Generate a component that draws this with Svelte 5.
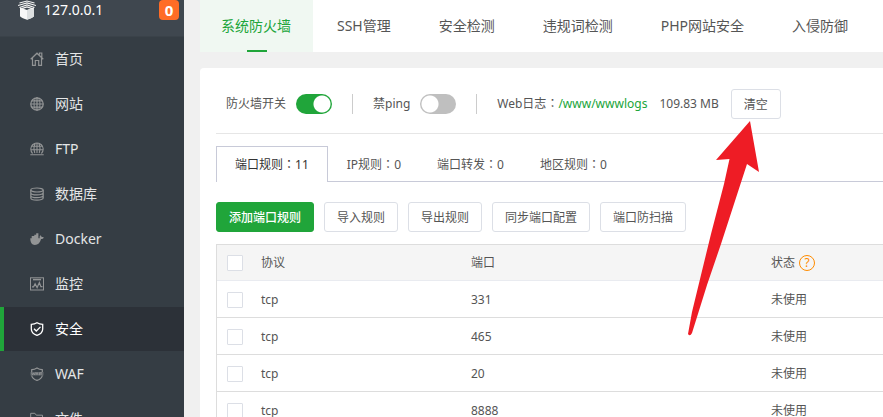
<script>
  const menu = [
    { icon: 'home', label: '首页' },
    { icon: 'globe', label: '网站' },
    { icon: 'ftp', label: 'FTP' },
    { icon: 'database', label: '数据库' },
    { icon: 'docker', label: 'Docker' },
    { icon: 'monitor', label: '监控' },
    { icon: 'shield', label: '安全' },
    { icon: 'waf', label: 'WAF' },
    { icon: 'folder', label: '文件' }
  ];
  const sections = ['系统防火墙', 'SSH管理', '安全检测', '违规词检测', 'PHP网站安全', '入侵防御'];
  const ruleTabs = [
    { name: '端口规则', count: 11 },
    { name: 'IP规则', count: 0 },
    { name: '端口转发', count: 0 },
    { name: '地区规则', count: 0 }
  ];
  const actions = ['添加端口规则', '导入规则', '导出规则', '同步端口配置', '端口防扫描'];
  const ports = ['331', '465', '20', '8888'];

  let activeMenu = $state('安全');
  let activeSection = $state('系统防火墙');
  let activeRule = $state('端口规则');
  let firewall = $state(true);
  let blockPing = $state(false);
</script>

<div class="page">
  <aside>
    <header class="host">
      <svg class="logo" width="18" height="20" viewBox="0 0 18 20">
        <path d="M2 7.500 9 10l7-2.500v8.700c-1 1.700-4.500 2.200-7 3.600-2.500-1.400-6-1.900-7-3.600z" fill="#f7f7f7" />
        <path d="M9 10v9.800c2.500-1.400 6-1.900 7-3.600V7.500z" fill="#dcdfe0" />
        <path d="M0 5.500 9 2.900l9 2.600M1.500 3 9 1l7.500 2M1.500 7.500 9 5l7.500 2.500M3 8.900l6-2 6 2" fill="none" stroke="#f4f4f4" stroke-width="1.200" />
      </svg>
      <span class="ip">127.0.0.1</span>
      <span class="badge">0</span>
    </header>
    <nav>
      {#each menu as item}
        <a href="#{item.icon}" class:active={activeMenu === item.label} onclick={() => (activeMenu = item.label)}>
          <svg width="14" height="14" viewBox="0 0 14 14" fill="none" stroke="currentColor" stroke-width="1">
            {#if item.icon === 'home'}
              <path d="M.7 7.300 7 1.200l6.300 6.100M2.500 6v7.300h2.800V8.500h3.400v4.800h2.800V6M9.500 2.500V1h2.300v4.500" stroke-width="1.200" />
            {:else if item.icon === 'globe'}
              <circle cx="7" cy="7" r="6.200" stroke-width="1.300" />
              <ellipse cx="7" cy="7" rx="3" ry="6.200" />
              <path d="M7 .8v12.400M.8 7h12.400M1.800 3.800h10.400M1.800 10.200h10.400" stroke-width="1.200" />
            {:else if item.icon === 'ftp'}
              <path d="M2.600 11.500A6.200 6.200 0 1 1 11.400 11.500M4.800 11C3.800 8 4 3.500 5.500 1M9.200 11c1-3 .8-7.500-.7-10M7 .8V11M1 7.800h12M1.500 4.300h11M.3 12.700h13.400" stroke-width="1.100" />
            {:else if item.icon === 'database'}
              <ellipse cx="7" cy="3" rx="6.200" ry="2" stroke-width="1.200" />
              <path d="M.8 3v8c0 1.200 2.800 2.200 6.200 2.200s6.200-1 6.200-2.200V3M.8 5.700c0 1.200 2.800 2.200 6.200 2.200s6.200-1 6.200-2.200M.8 8.400c0 1.200 2.800 2.200 6.200 2.200s6.200-1 6.200-2.200" stroke-width="1.200" />
            {:else if item.icon === 'docker'}
              <path d="M.3 6.200h1.400V4h2.600V2.800h1.900V1.200h2.200v5h1.300c-.2-1.300 0-2.200.7-3 .8.500 1.100 1.100 1.200 1.900.8-.1 1.500 0 2.200.4-.5 1-1.400 1.500-2.700 1.500C10 11 8 12.900 4.900 12.900 2 12.900.2 10.500.3 6.200z" fill="currentColor" stroke="none" />
            {:else if item.icon === 'monitor'}
              <rect x=".5" y=".8" width="13" height="12.200" />
              <path d="M3 2.600h8" stroke-width="1.500" />
              <path d="M2 9.800h1.600l1.500-3 2 3.800 2.300-5 1.500 4H12.500" stroke-width="1.200" />
            {:else if item.icon === 'shield'}
              <path d="M7 .7c1.700 1 3.500 1.500 5.700 1.600v4.600c0 3-2.200 5.200-5.700 6.500C3.500 12.100 1.300 9.900 1.300 6.900V2.300C3.500 2.200 5.300 1.700 7 .7z" stroke-width="1.300" />
              <path d="m4 6.700 2.300 2.300 4.200-4.100" stroke-width="1.300" />
            {:else if item.icon === 'waf'}
              <path d="M1.700 5V2.700C3.700 2.600 5.400 2 7 1c1.600 1 3.300 1.600 5.300 1.700V5M1.700 8.500c.5 2.600 2.600 4 5.300 4.900 2.700-.9 4.800-2.300 5.300-4.900" stroke-width="1.200" />
              <path d="M.5 5h13v3.500H.5z" fill="currentColor" opacity=".5" stroke="none" />
              <path d="m1.500 5.500 1 2.500 1-2 1 2 1-2.500M6 8l1-2.500L8 8M9.500 8.200V5.700H12M9.500 7H12" stroke-width=".8" />
            {:else}
              <path d="M.7 13V1.300h4.200l1.400 1.900h6.200v2M.7 13h10.800l2-7.500H3.500L.9 12.500" />
            {/if}
          </svg>
          <span>{item.label}</span>
        </a>
      {/each}
    </nav>
  </aside>

  <main>
    <div class="sections" role="tablist">
      {#each sections as name}
        <button role="tab" aria-selected={activeSection === name} onclick={() => (activeSection = name)}>{name}</button>
      {/each}
    </div>

    <section class="card">
      <div class="status">
        <label>防火墙开关<input class="switch" type="checkbox" bind:checked={firewall} /></label>
        <i class="rule"></i>
        <label>禁ping<input class="switch" type="checkbox" bind:checked={blockPing} /></label>
        <i class="rule"></i>
        <div class="logs">
          <span>Web日志<span class="colon">：</span><a href="#logs">/www/wwwlogs</a></span>
          <span>109.83 MB</span>
          <button class="btn">清空</button>
        </div>
      </div>

      <div class="ruletabs" role="tablist">
        {#each ruleTabs as tab}
          <button role="tab" aria-selected={activeRule === tab.name} onclick={() => (activeRule = tab.name)}>{tab.name}<span class="colon">：</span>{tab.count}</button>
        {/each}
      </div>

      <div class="actions">
        {#each actions as name, i}
          <button class="btn" class:primary={i === 0}>{name}</button>
        {/each}
      </div>

      <table>
        <thead>
          <tr>
            <th class="check"><input type="checkbox" aria-label="全选" /></th>
            <th class="proto">协议</th>
            <th class="port">端口</th>
            <th><span class="state">状态<button class="help" aria-label="帮助">?</button></span></th>
          </tr>
        </thead>
        <tbody>
          {#each ports as port}
            <tr>
              <td class="check"><input type="checkbox" aria-label={port} /></td>
              <td>tcp</td>
              <td>{port}</td>
              <td>未使用</td>
            </tr>
          {/each}
        </tbody>
      </table>
    </section>
  </main>

  <svg class="arrow" width="72" height="216" viewBox="688 120 72 216" aria-hidden="true">
    <path d="M750 121 759 172 747 164 734 204 721 244 707 285 692 333Q690 337 688 334L692 312 701 275 711 234 724 184 729.500 159L716 160z" fill="#ee1c25" />
  </svg>
</div>

<style>
  :global(body) {
    margin: 0;
  }
  .page {
    position: relative;
    display: flex;
    height: 100vh;
    overflow: hidden;
    background: #f0f0f0;
    color: #555;
    font: 12px/20px 'Noto Sans', 'Noto Sans CJK SC', sans-serif;
  }
  button {
    font: inherit;
    color: inherit;
    margin: 0;
    cursor: pointer;
    white-space: nowrap;
  }
  a {
    text-decoration: none;
  }
  .colon {
    font-family: 'Noto Sans CJK TC', sans-serif;
    line-height: 1;
  }

  aside {
    flex: 0 0 184px;
    background: #353d44;
    font-size: 14px;
  }
  .host {
    display: flex;
    align-items: center;
    height: 20px;
    padding: 0 5px 16px 18px;
    border-bottom: 1px solid #3a4249;
    background: #3f474f;
    color: #fff;
  }
  .ip {
    flex: 1;
    margin-left: 8px;
  }
  .badge {
    width: 20px;
    border-radius: 4px;
    background: #ff6c26;
    font-size: 15px;
    font-weight: 700;
    text-align: center;
  }
  nav {
    display: flex;
    flex-direction: column;
    gap: 1px;
  }
  nav a {
    display: flex;
    align-items: center;
    gap: 11px;
    height: 44px;
    padding-left: 26px;
    border-left: 4px solid transparent;
    color: #e4e6e7;
  }
  nav a svg {
    color: #929495;
  }
  nav a.active {
    border-color: #20a53a;
    background: #2c3138;
    color: #fff;
  }
  nav a.active svg {
    color: #fff;
  }

  main {
    flex: 1;
    min-width: 0;
    margin-left: 16px;
  }
  .sections {
    display: flex;
    height: 52px;
    background: #fff;
    overflow: hidden;
  }
  .sections button {
    position: relative;
    padding: 0 24px;
    border: 0;
    background: none;
    font-size: 14px;
  }
  .sections button:first-child {
    padding: 0 22px 0 21px;
  }
  .sections button[aria-selected='true'] {
    background: #f0f8f2;
    color: #20a53a;
  }
  .sections button[aria-selected='true']::after {
    content: '';
    position: absolute;
    bottom: 0;
    left: calc(50% - 10px);
    width: 20px;
    height: 2px;
    background: #20a53a;
  }

  .card {
    margin-top: 16px;
    padding-left: 16px;
    border-radius: 4px 0 0 0;
    background: #fff;
  }
  .status {
    display: flex;
    align-items: center;
    gap: 20px;
    height: 58px;
    padding: 7px 10px 0;
    border-bottom: 1px solid #e6e6e6;
    white-space: nowrap;
  }
  .status label,
  .logs {
    display: flex;
    align-items: center;
    gap: 10px;
  }
  .logs {
    gap: 12px;
  }
  .rule {
    width: 1px;
    height: 20px;
    background: #ccc;
  }
  .logs a {
    color: #20a53a;
  }
  .switch {
    appearance: none;
    width: 36px;
    height: 20px;
    margin: 0;
    border-radius: 10px;
    background: radial-gradient(circle at 10px 10px, #fff 8px, #bfbfbf 9px);
  }
  .switch:checked {
    background: radial-gradient(circle at 26px 10px, #fff 8px, #20a53a 9px);
  }

  .btn {
    height: 30px;
    padding: 1px 12px 0;
    border: 1px solid #dcdfe6;
    border-radius: 3px;
    background: #fff;
  }
  .btn.primary {
    border-color: #20a53a;
    background: #20a53a;
    color: #fff;
    font-weight: 500;
  }

  .ruletabs {
    display: flex;
    height: 36px;
    margin-top: 12px;
    box-shadow: inset 0 -1px #c8cad8;
  }
  .ruletabs button {
    padding: 1px 18px 0;
    border: 0;
    background: none;
  }
  .ruletabs button[aria-selected='true'] {
    margin-right: 1px;
    border: 1px solid #c8cad8;
    border-bottom: 0;
    background: #fff;
    color: #333;
  }

  .actions {
    display: flex;
    gap: 10px;
    padding: 20px 0 12px;
  }

  table {
    width: 100%;
    table-layout: fixed;
    border-collapse: separate;
    border-spacing: 0;
    border-top: 1px solid #ddd;
    border-left: 1px solid #ddd;
  }
  th,
  td {
    box-sizing: border-box;
    height: 37px;
    padding: 1px 0 0;
    border-bottom: 1px solid #ddd;
    font-weight: 400;
    text-align: left;
  }
  th {
    height: 36px;
    padding: 0;
    border-color: #e9ebf0;
    background: #f5f5f5;
  }
  .check {
    width: 44px;
  }
  .proto {
    width: 210px;
  }
  .port {
    width: 300px;
  }
  .check input {
    display: block;
    appearance: none;
    box-sizing: border-box;
    width: 16px;
    height: 16px;
    margin: 0 10px;
    border: 1px solid #dcdfe6;
    border-radius: 1px;
    background: #fff;
  }
  .state {
    display: flex;
    align-items: center;
    gap: 4px;
  }
  .help {
    width: 16px;
    height: 16px;
    padding: 0;
    border: 1px solid #ff8c00;
    border-radius: 50%;
    background: none;
    color: #ff8c00;
    line-height: 14px;
  }

  .arrow {
    position: absolute;
    left: 688px;
    top: 120px;
    pointer-events: none;
  }
</style>
